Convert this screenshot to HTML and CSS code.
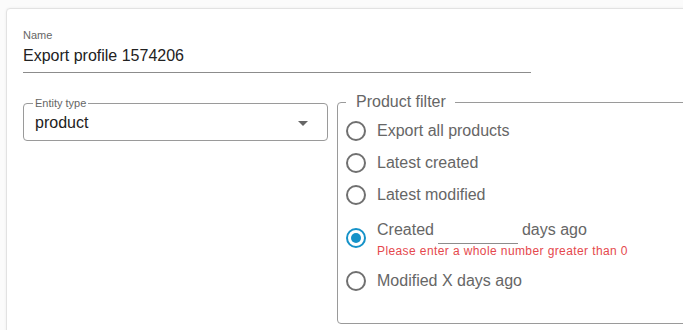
FILE: index.html
```html
<!DOCTYPE html>
<html lang="en">
<head>
  <meta charset="UTF-8">
  <title>Export profile</title>
  <link rel="stylesheet" href="styles.css">
</head>
<body>
  <div class="card">
    <div class="name-field">
      <div class="field-label">Name</div>
      <div class="field-value">Export profile 1574206</div>
    </div>

    <div class="row">
      <fieldset class="select-box">
        <legend>Entity type</legend>
        <div class="select-inner">
          <span class="select-value">product</span>
          <span class="arrow"></span>
        </div>
      </fieldset>

      <fieldset class="filter-box">
        <legend>Product filter</legend>
        <div class="radio-row">
          <span class="radio"></span>
          <span class="radio-label">Export all products</span>
        </div>
        <div class="radio-row">
          <span class="radio"></span>
          <span class="radio-label">Latest created</span>
        </div>
        <div class="radio-row">
          <span class="radio"></span>
          <span class="radio-label">Latest modified</span>
        </div>
        <div class="radio-row tall">
          <span class="radio checked"></span>
          <div class="radio-block">
            <div class="days-line">
              <span class="radio-label">Created</span>
              <input class="days-input" type="text">
              <span class="radio-label">days ago</span>
            </div>
            <div class="error">Please enter a whole number greater than 0</div>
          </div>
        </div>
        <div class="radio-row">
          <span class="radio"></span>
          <span class="radio-label">Modified X days ago</span>
        </div>
      </fieldset>
    </div>
  </div>
</body>
</html>
```

FILE: styles.css
```css
body {
  margin: 0;
  padding: 0;
  background-color: #fbfbfb;
  font-family: "Liberation Sans", Arial, sans-serif;
  color: #222;
  overflow: hidden;
}

.card {
  margin: 8px 0 0 6px;
  width: 900px;
  min-height: 400px;
  padding: 20px 0 0 16px;
  background: white;
  border: 1px solid #e2e2e2;
  border-radius: 4px;
  box-shadow: 0 0 3px rgba(0, 0, 0, 0.06);
}

.name-field {
  width: 508px;
  border-bottom: 1px solid #8c8c8c;
  padding-bottom: 6px;
}

.field-label {
  font-size: 11px;
  line-height: 13px;
  color: #666;
}

.field-value {
  margin-top: 4px;
  font-size: 16px;
  line-height: 20px;
  color: #222;
}

.row {
  display: flex;
  align-items: flex-start;
  gap: 9px;
  margin-top: 20px;
}

fieldset {
  margin: 0;
  min-width: 0;
  flex-shrink: 0;
  border: 1px solid #9a9a9a;
  border-radius: 4px;
}

.select-box {
  width: 305px;
  box-sizing: border-box;
  margin-top: 4px;
  padding: 3px 19px 7px 11px;
}

.select-box legend {
  font-size: 11px;
  line-height: 13px;
  color: #666;
  padding: 0 2px;
  margin-left: -2px;
}

.select-inner {
  display: flex;
  align-items: center;
  justify-content: space-between;
}

.select-value {
  font-size: 16px;
  line-height: 20px;
  color: #222;
}

.arrow {
  width: 0;
  height: 0;
  border-left: 5px solid transparent;
  border-right: 5px solid transparent;
  border-top: 5px solid #666;
}

.filter-box {
  width: 500px;
  height: 231px;
  box-sizing: border-box;
  padding: 4px 8px 0 8px;
}

.filter-box legend {
  font-size: 16px;
  line-height: 18px;
  color: #666;
  padding: 0 9px 0 10px;
  margin-left: 0;
}

.radio-row {
  display: flex;
  align-items: center;
  gap: 11px;
  height: 32px;
}

.radio-row.tall {
  height: 54px;
}

.radio {
  width: 20px;
  height: 20px;
  box-sizing: border-box;
  border: 2px solid #707070;
  border-radius: 50%;
  flex-shrink: 0;
}

.radio.checked {
  border-color: #1592c8;
  display: flex;
  align-items: center;
  justify-content: center;
}

.radio.checked::after {
  content: "";
  width: 10px;
  height: 10px;
  border-radius: 50%;
  background: #1592c8;
}

.radio-label {
  font-size: 16px;
  line-height: 20px;
  color: #666;
}

.days-line {
  display: flex;
  align-items: center;
  height: 24px;
}

.days-input {
  width: 80px;
  height: 24px;
  box-sizing: border-box;
  margin: 4px 4px 0 4px;
  padding: 0;
  border: none;
  border-bottom: 1px solid #8c8c8c;
  outline: none;
  background: transparent;
}

.error {
  margin-top: 3px;
  font-size: 12px;
  line-height: 13px;
  letter-spacing: 0.4px;
  color: #e5484d;
}
```
